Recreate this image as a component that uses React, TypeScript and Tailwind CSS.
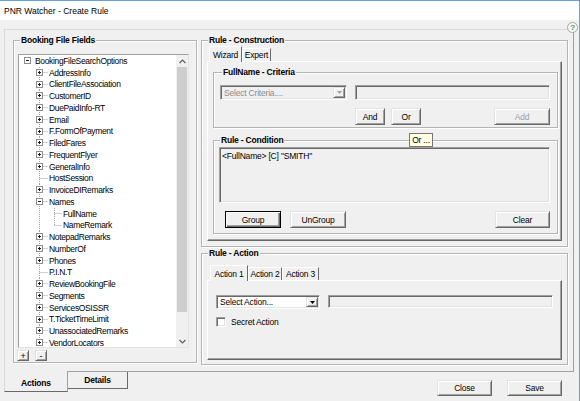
import React from "react";

type Kind = "plus" | "minus" | "leaf";

interface TreeRow {
  label: string;
  level: 0 | 1 | 2;
  kind: Kind;
  last?: boolean;
}

const TREE: TreeRow[] = [
  { label: "BookingFileSearchOptions", level: 0, kind: "minus" },
  { label: "AddressInfo", level: 1, kind: "plus" },
  { label: "ClientFileAssociation", level: 1, kind: "plus" },
  { label: "CustomerID", level: 1, kind: "plus" },
  { label: "DuePaidInfo-RT", level: 1, kind: "plus" },
  { label: "Email", level: 1, kind: "plus" },
  { label: "F.FormOfPayment", level: 1, kind: "plus" },
  { label: "FiledFares", level: 1, kind: "plus" },
  { label: "FrequentFlyer", level: 1, kind: "plus" },
  { label: "GeneralInfo", level: 1, kind: "plus" },
  { label: "HostSession", level: 1, kind: "leaf" },
  { label: "InvoiceDIRemarks", level: 1, kind: "plus" },
  { label: "Names", level: 1, kind: "minus" },
  { label: "FullName", level: 2, kind: "leaf" },
  { label: "NameRemark", level: 2, kind: "leaf", last: true },
  { label: "NotepadRemarks", level: 1, kind: "plus" },
  { label: "NumberOf", level: 1, kind: "plus" },
  { label: "Phones", level: 1, kind: "plus" },
  { label: "P.I.N.T", level: 1, kind: "leaf" },
  { label: "ReviewBookingFile", level: 1, kind: "plus" },
  { label: "Segments", level: 1, kind: "plus" },
  { label: "ServicesOSISSR", level: 1, kind: "plus" },
  { label: "T.TicketTimeLimit", level: 1, kind: "plus" },
  { label: "UnassociatedRemarks", level: 1, kind: "plus" },
  { label: "VendorLocators", level: 1, kind: "plus", last: true },
];

// classic win32 bevels
const RAISED =
  "border border-t-[#e3e3e3] border-l-[#e3e3e3] border-r-[#696969] border-b-[#696969] shadow-[inset_1px_1px_0_#ffffff,inset_-1px_-1px_0_#a0a0a0] bg-[#f0f0f0]";
const SUNKEN =
  "border border-t-[#a0a0a0] border-l-[#a0a0a0] border-r-white border-b-white shadow-[inset_1px_1px_0_#696969,inset_-1px_-1px_0_#e3e3e3]";

const ROW_H = 11.75;

function Expander({ x, kind }: { x: number; kind: Kind }) {
  if (kind === "leaf") return null;
  // x is the pixel-centre (n + .5) of the connector line
  return (
    <g>
      <rect x={x - 3} y={2.5} width={6} height={6} fill="#fff" stroke="#8e8e8e" />
      <rect x={x - 1.5} y={5} width={3} height={1} fill="#1a1a1a" />
      {kind === "plus" && <rect x={x - 0.5} y={4} width={1} height={3} fill="#1a1a1a" />}
    </g>
  );
}

function TreeGlyph({ row }: { row: TreeRow }) {
  const dot = { stroke: "#a0a0a0", strokeWidth: 1, strokeDasharray: "1 1" };
  const width = row.level === 0 ? 16 : row.level === 1 ? 30 : 44;
  return (
    <svg width={width} height={ROW_H} className="shrink-0">
      {row.level >= 1 && (
        <line x1={20.5} y1={0} x2={20.5} y2={row.level === 1 && row.last ? 5.5 : ROW_H} {...dot} />
      )}
      {row.level === 1 && <line x1={20.5} y1={5.5} x2={29} y2={5.5} {...dot} />}
      {row.level === 2 && (
        <>
          <line x1={35.5} y1={0} x2={35.5} y2={row.last ? 5.5 : ROW_H} {...dot} />
          <line x1={35.5} y1={5.5} x2={43} y2={5.5} {...dot} />
        </>
      )}
      {row.level === 0 && <Expander x={8.5} kind={row.kind} />}
      {row.level === 1 && <Expander x={20.5} kind={row.kind} />}
    </svg>
  );
}

function Chevron({ up }: { up?: boolean }) {
  return (
    <svg width="7" height="5" viewBox="0 0 7 5">
      <path d={up ? "M0.5 4 L3.5 1 L6.5 4" : "M0.5 1 L3.5 4 L6.5 1"} fill="none" stroke="#606060" strokeWidth="1.2" />
    </svg>
  );
}

function Btn({
  label,
  className = "",
  disabled,
  primary,
}: {
  label: string;
  className?: string;
  disabled?: boolean;
  primary?: boolean;
}) {
  const frame = primary
    ? "border border-black shadow-[inset_1px_1px_0_#ffffff,inset_-1px_-1px_0_#696969,inset_-2px_-2px_0_#a0a0a0] bg-[#f0f0f0]"
    : RAISED;
  return (
    <button className={`${frame} flex items-center justify-center ${disabled ? "text-[#a0a0a0]" : "text-black"} ${className}`}>
      {label}
    </button>
  );
}

function GroupBox({
  title,
  className = "",
  legendClass = "ml-[6px]",
  children,
}: {
  title: string;
  className?: string;
  legendClass?: string;
  children: React.ReactNode;
}) {
  return (
    <fieldset className={`border border-[#b4b4b4] shadow-[inset_1px_1px_0_#ffffff,1px_1px_0_#ffffff] ${className}`}>
      <legend className={`${legendClass} bg-[#f0f0f0] px-[1px] font-bold leading-[10px]`}>{title}</legend>
      {children}
    </fieldset>
  );
}

function TopTab({ label, selected, className = "" }: { label: string; selected?: boolean; className?: string }) {
  return (
    <div
      className={`${
        selected ? "relative -mb-px h-[16px] bg-[#f0f0f0]" : "h-[13px]"
      } flex items-center justify-center border-t border-l border-r border-t-white border-l-white border-r-[#696969] ${className}`}
    >
      {label}
    </div>
  );
}

function Combo({ text, disabled, className = "" }: { text: string; disabled?: boolean; className?: string }) {
  return (
    <div className={`flex ${SUNKEN} ${disabled ? "bg-[#f0f0f0] text-[#8c8c8c]" : "bg-white text-black"} ${className}`}>
      <span className="flex flex-1 items-center pl-[3px]">{text}</span>
      <span className={`m-[1px] flex w-[12px] items-center justify-center ${RAISED}`}>
        <svg width="5" height="3" viewBox="0 0 5 3">
          <path d="M0 0 H5 L2.5 3 Z" fill={disabled ? "#a0a0a0" : "#000"} />
        </svg>
      </span>
    </div>
  );
}

export default function App() {
  return (
    <div className="relative h-[401px] w-[580px] overflow-hidden border-t border-r border-[#6a9fd8] bg-[#f0f0f0] font-['Liberation_Sans',Arial,sans-serif] text-[8.5px] leading-[10px] tracking-[-0.2px] text-black">
      {/* title bar */}
      <div className="flex h-[19px] items-center bg-white pl-[4px] tracking-normal">PNR Watcher - Create Rule</div>

      {/* Actions page */}
      <div className="ml-[4px] mt-[9px] flex h-[343px] w-[570px] gap-[4px] border border-t-[#d9d9d9] border-l-[#d9d9d9] border-r-[#a0a0a0] border-b-[#a0a0a0] pl-[8px] pt-[5px]">
        <GroupBox title="Booking File Fields" className="h-[328px] w-[184px]">
          <div className="ml-[4px] mt-[9px] flex h-[294px] w-[171px] border border-t-[#a0a0a0] border-l-[#a0a0a0] border-r-[#e3e3e3] border-b-[#e3e3e3] bg-white">
            <div className="flex flex-1 flex-col overflow-hidden">
              {TREE.map((row) => (
                <div key={row.label} className="flex h-[11.75px] items-center whitespace-nowrap tracking-[-0.35px]">
                  <TreeGlyph row={row} />
                  <span>{row.label}</span>
                </div>
              ))}
            </div>
            <div className="flex w-[12px] flex-col bg-[#f0f0f0]">
              <div className="flex h-[12px] items-center justify-center">
                <Chevron up />
              </div>
              <div className="mx-[1px] h-[245px] bg-[#cdcdcd]" />
              <div className="flex-1" />
              <div className="flex h-[12px] items-center justify-center">
                <Chevron />
              </div>
            </div>
          </div>
          <div className="ml-[3px] mt-[2px] flex gap-[6px]">
            <Btn label="+" className="h-[11px] w-[12px] text-[9px]" />
            <Btn label="-" className="h-[11px] w-[12px] text-[9px]" />
          </div>
        </GroupBox>

        <div className="flex flex-col gap-[1px]">
          <GroupBox title="Rule - Construction" className="h-[212px] w-[367px]">
            <div className="w-[355px] pl-[5px] pt-[1px] box-content">
              <div className="flex h-[15px] items-end pl-[2px]">
                <TopTab label="Wizard" selected className="w-[33px]" />
                <TopTab label="Expert" className="w-[29px]" />
              </div>
              <div className="h-[180px] border border-t-white border-l-white border-r-[#696969] border-b-[#696969] pl-[5px] pt-[5px] shadow-[inset_-1px_-1px_0_#a0a0a0]">
                <GroupBox title="FullName - Criteria" className="h-[61px] w-[345px]" legendClass="ml-[8px]">
                  <div className="ml-[6px] mt-[8px] flex w-[330px] gap-[8px]">
                    <Combo text="Select Criteria...." disabled className="h-[15px] w-[127px]" />
                    <div className={`h-[15px] w-[195px] bg-[#f0f0f0] ${SUNKEN}`} />
                  </div>
                  <div className="ml-[6px] mt-[8px] flex w-[330px]">
                    <Btn label="And" className="ml-[135px] h-[17px] w-[30px]" />
                    <Btn label="Or" className="ml-[6px] h-[17px] w-[30px]" />
                    <Btn label="Add" disabled className="ml-auto h-[17px] w-[56px]" />
                  </div>
                </GroupBox>

                <GroupBox title="Rule - Condition" className="mt-[7px] h-[99px] w-[345px]" legendClass="ml-[6px]">
                  <div className={`ml-[5px] mt-[2px] h-[56px] w-[331px] bg-[#f0f0f0] pl-[2px] pt-[3px] ${SUNKEN}`}>
                    {'<FullName> [C] "SMITH"'}
                  </div>
                  <div className="ml-[11px] mt-[8px] flex w-[325px]">
                    <Btn label="Group" primary className="h-[17px] w-[56px]" />
                    <Btn label="UnGroup" className="ml-[9px] h-[17px] w-[56px]" />
                    <Btn label="Clear" className="ml-auto h-[17px] w-[55px]" />
                  </div>
                </GroupBox>
              </div>
            </div>
          </GroupBox>

          <GroupBox title="Rule - Action" className="h-[117px] w-[367px]">
            <div className="w-[355px] pl-[5px] pt-[7px] box-content">
              <div className="flex h-[15px] items-end pl-[3px]">
                <TopTab label="Action 1" selected className="w-[38px]" />
                <TopTab label="Action 2" className="w-[34px]" />
                <TopTab label="Action 3" className="w-[37px]" />
              </div>
              <div className="h-[80px] border border-t-white border-l-white border-r-[#696969] border-b-[#696969] pl-[8px] pt-[14px] shadow-[inset_-1px_-1px_0_#a0a0a0]">
                <div className="flex gap-[8px]">
                  <Combo text="Select Action..." className="h-[14px] w-[104px]" />
                  <div className={`h-[13px] w-[225px] bg-[#f0f0f0] ${SUNKEN}`} />
                </div>
                <div className="mt-[8px] flex items-center gap-[5px]">
                  <div className={`h-[10px] w-[10px] bg-white ${SUNKEN}`} />
                  <span>Secret Action</span>
                </div>
              </div>
            </div>
          </GroupBox>
        </div>
      </div>

      {/* bottom tabs + dialog buttons */}
      <div className="-mt-px flex items-start">
        <div className="relative ml-[4px] flex h-[21px] w-[64px] justify-center border-l border-r border-b border-l-[#d9d9d9] border-r-[#a0a0a0] border-b-[#696969] bg-[#f0f0f0] pt-[7px] font-bold">
          Actions
        </div>
        <div className="mt-px flex h-[17px] w-[60px] items-center justify-center border-r border-b border-r-[#696969] border-b-[#696969] font-bold">
          Details
        </div>
        <div className="ml-auto mr-[17px] mt-[9px] flex gap-[15px]">
          <Btn label="Close" className="h-[16px] w-[55px]" />
          <Btn label="Save" className="h-[16px] w-[55px]" />
        </div>
      </div>

      {/* hover tooltip over the Or button */}
      <div className="absolute left-[409px] top-[132px] flex h-[14px] w-[24px] items-center justify-center border border-[#767676] bg-[#ffffe1]">
        Or ...
      </div>

      {/* help glyph */}
      <div className="absolute left-[567px] top-[21px] flex h-[11px] w-[11px] items-center justify-center rounded-full border border-[#a8a8a8] bg-[#f7f7f7] text-[8px] font-bold text-[#3f9b3f]">
        ?
      </div>
    </div>
  );
}
